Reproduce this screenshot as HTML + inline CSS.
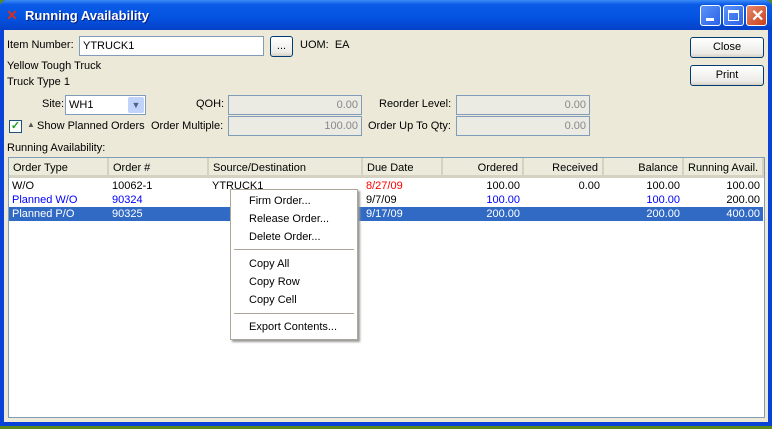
<!DOCTYPE html>
<html><head><style>
*{box-sizing:border-box;margin:0;padding:0}
body{width:772px;height:429px;position:relative;overflow:hidden;background:#5a8a1e;font-family:"Liberation Sans",sans-serif;font-size:11px;color:#000}
.a{position:absolute;white-space:nowrap}
.win{position:absolute;left:0;top:0;width:772px;height:426px;background:#0842d6;border-radius:7px 7px 0 0}
.title{position:absolute;left:0;top:0;width:772px;height:30px;border-radius:7px 7px 0 0;background:linear-gradient(#3d8cf5 0,#0a5ae8 15%,#0453e0 60%,#0540c8 100%)}
.body{position:absolute;left:4px;top:30px;width:764px;height:392px;background:#ece9d8}
.in{position:absolute;background:#fff;border:1px solid #7f9db9;height:20px;padding:0 3px;line-height:18px;font-size:11px}
.dis{background:#ebeae3;color:#888;text-align:right}
.btn{position:absolute;border:1px solid #003c74;border-radius:3px;background:linear-gradient(#fff,#ecebe6 80%,#d6d0c5);text-align:center;font-size:11px}
.th{position:absolute;top:0;height:20px;line-height:20px;border-right:2px solid #d6d2c2;padding:0 4px}
.row{position:absolute;left:0;width:754px;height:14px;line-height:14px}
.row span{position:absolute;padding:0 3px}
.mi{position:absolute;left:18px}
.wb{position:absolute;top:5px;width:21px;height:21px;border:1px solid #fff;border-radius:3px;background:linear-gradient(135deg,#5c93f8,#2a62e8)}
</style></head><body>
<div class="win"></div>
<div class="title">
<div class="a" style="left:6px;top:7px;color:#d43020;font-weight:bold;font-size:14px">✕</div>
<div class="a" style="left:25px;top:8px;color:#fff;font-weight:bold;font-size:13px;text-shadow:1px 1px #0a1e80">Running Availability</div>
<div class="wb" style="left:700px"><div class="a" style="left:5px;top:12px;width:8px;height:3px;background:#fff"></div></div>
<div class="wb" style="left:723px"><div class="a" style="left:4px;top:4px;width:11px;height:11px;border:1px solid #fff;border-top-width:3px"></div></div>
<div class="wb" style="left:746px;background:linear-gradient(135deg,#e8876a,#c8421c)"><div class="a" style="left:4px;top:0px;color:#fff;font-weight:bold;font-size:16px">✕</div></div>
</div>
<div class="body"></div>
<div class="a" style="left:7px;top:39px">Item Number:</div>
<div class="in" style="left:79px;top:36px;width:185px">YTRUCK1</div>
<div class="btn" style="left:270px;top:36px;width:23px;height:21px;line-height:18px">...</div>
<div class="a" style="left:300px;top:39px">UOM:&nbsp; EA</div>
<div class="a" style="left:7px;top:60px">Yellow Tough Truck</div>
<div class="a" style="left:7px;top:76px">Truck Type 1</div>
<div class="a" style="left:42px;top:98px">Site:</div>
<div class="in" style="left:65px;top:95px;width:81px">WH1</div>
<div class="a" style="left:128px;top:97px;width:16px;height:16px;background:#c1d3fb;border-radius:2px;color:#4d6185;text-align:center;font-size:9px;line-height:16px">▼</div>
<div class="a" style="left:196px;top:98px">QOH:</div>
<div class="in dis" style="left:228px;top:95px;width:134px">0.00</div>
<div class="a" style="left:379px;top:98px">Reorder Level:</div>
<div class="in dis" style="left:456px;top:95px;width:134px">0.00</div>
<div class="a" style="left:9px;top:120px;width:13px;height:13px;border:1px solid #1c5180;background:#fff;color:#21a121;font-size:11px;line-height:11px;text-align:center;font-weight:bold">✓</div>
<div class="a" style="left:27px;top:120px;font-size:8px;color:#555">▲</div>
<div class="a" style="left:37px;top:120px">Show Planned Orders</div>
<div class="a" style="left:151px;top:120px">Order Multiple:</div>
<div class="in dis" style="left:228px;top:116px;width:134px">100.00</div>
<div class="a" style="left:368px;top:120px">Order Up To Qty:</div>
<div class="in dis" style="left:456px;top:116px;width:134px">0.00</div>
<div class="btn" style="left:690px;top:37px;width:74px;height:21px;line-height:19px">Close</div>
<div class="btn" style="left:690px;top:65px;width:74px;height:21px;line-height:19px">Print</div>
<div class="a" style="left:7px;top:142px">Running Availability:</div>
<div class="a" style="left:8px;top:157px;width:757px;height:261px;border:1px solid #7f9db9;background:#fff">
<div class="a" style="left:0;top:0;width:755px;height:20px;background:#ebeadb;border-bottom:3px solid #d6d2c2"></div>
<div class="th" style="left:0;width:100px">Order Type</div>
<div class="th" style="left:100px;width:100px">Order #</div>
<div class="th" style="left:200px;width:154px">Source/Destination</div>
<div class="th" style="left:354px;width:80px">Due Date</div>
<div class="th" style="left:434px;width:81px;text-align:right">Ordered</div>
<div class="th" style="left:515px;width:80px;text-align:right">Received</div>
<div class="th" style="left:595px;width:80px;text-align:right">Balance</div>
<div class="th" style="left:675px;width:80px;text-align:right">Running Avail.</div>
<div class="row" style="top:21px"><span style="left:0">W/O</span><span style="left:100px">10062-1</span><span style="left:200px">YTRUCK1</span><span style="left:354px;color:#f00">8/27/09</span><span style="right:240px">100.00</span><span style="right:160px">0.00</span><span style="right:80px">100.00</span><span style="right:0">100.00</span></div>
<div class="row" style="top:35px;color:#00f"><span style="left:0">Planned W/O</span><span style="left:100px">90324</span><span style="left:354px;color:#000">9/7/09</span><span style="right:240px">100.00</span><span style="right:80px">100.00</span><span style="right:0;color:#000">200.00</span></div>
<div class="row" style="top:49px;background:#316ac5;color:#fff"><span style="left:0">Planned P/O</span><span style="left:100px">90325</span><span style="left:354px">9/17/09</span><span style="right:240px">200.00</span><span style="right:80px">200.00</span><span style="right:0">400.00</span></div>
</div>
<div class="a" style="left:230px;top:189px;width:128px;height:151px;background:#fff;border:1px solid #aca899;box-shadow:2px 2px 2px #999">
<div class="mi" style="top:5px">Firm Order...</div>
<div class="mi" style="top:23px">Release Order...</div>
<div class="mi" style="top:41px">Delete Order...</div>
<div class="a" style="left:3px;top:59px;width:120px;height:1px;background:#aca899"></div>
<div class="mi" style="top:68px">Copy All</div>
<div class="mi" style="top:86px">Copy Row</div>
<div class="mi" style="top:104px">Copy Cell</div>
<div class="a" style="left:3px;top:123px;width:120px;height:1px;background:#aca899"></div>
<div class="mi" style="top:131px">Export Contents...</div>
</div>
</body></html>
